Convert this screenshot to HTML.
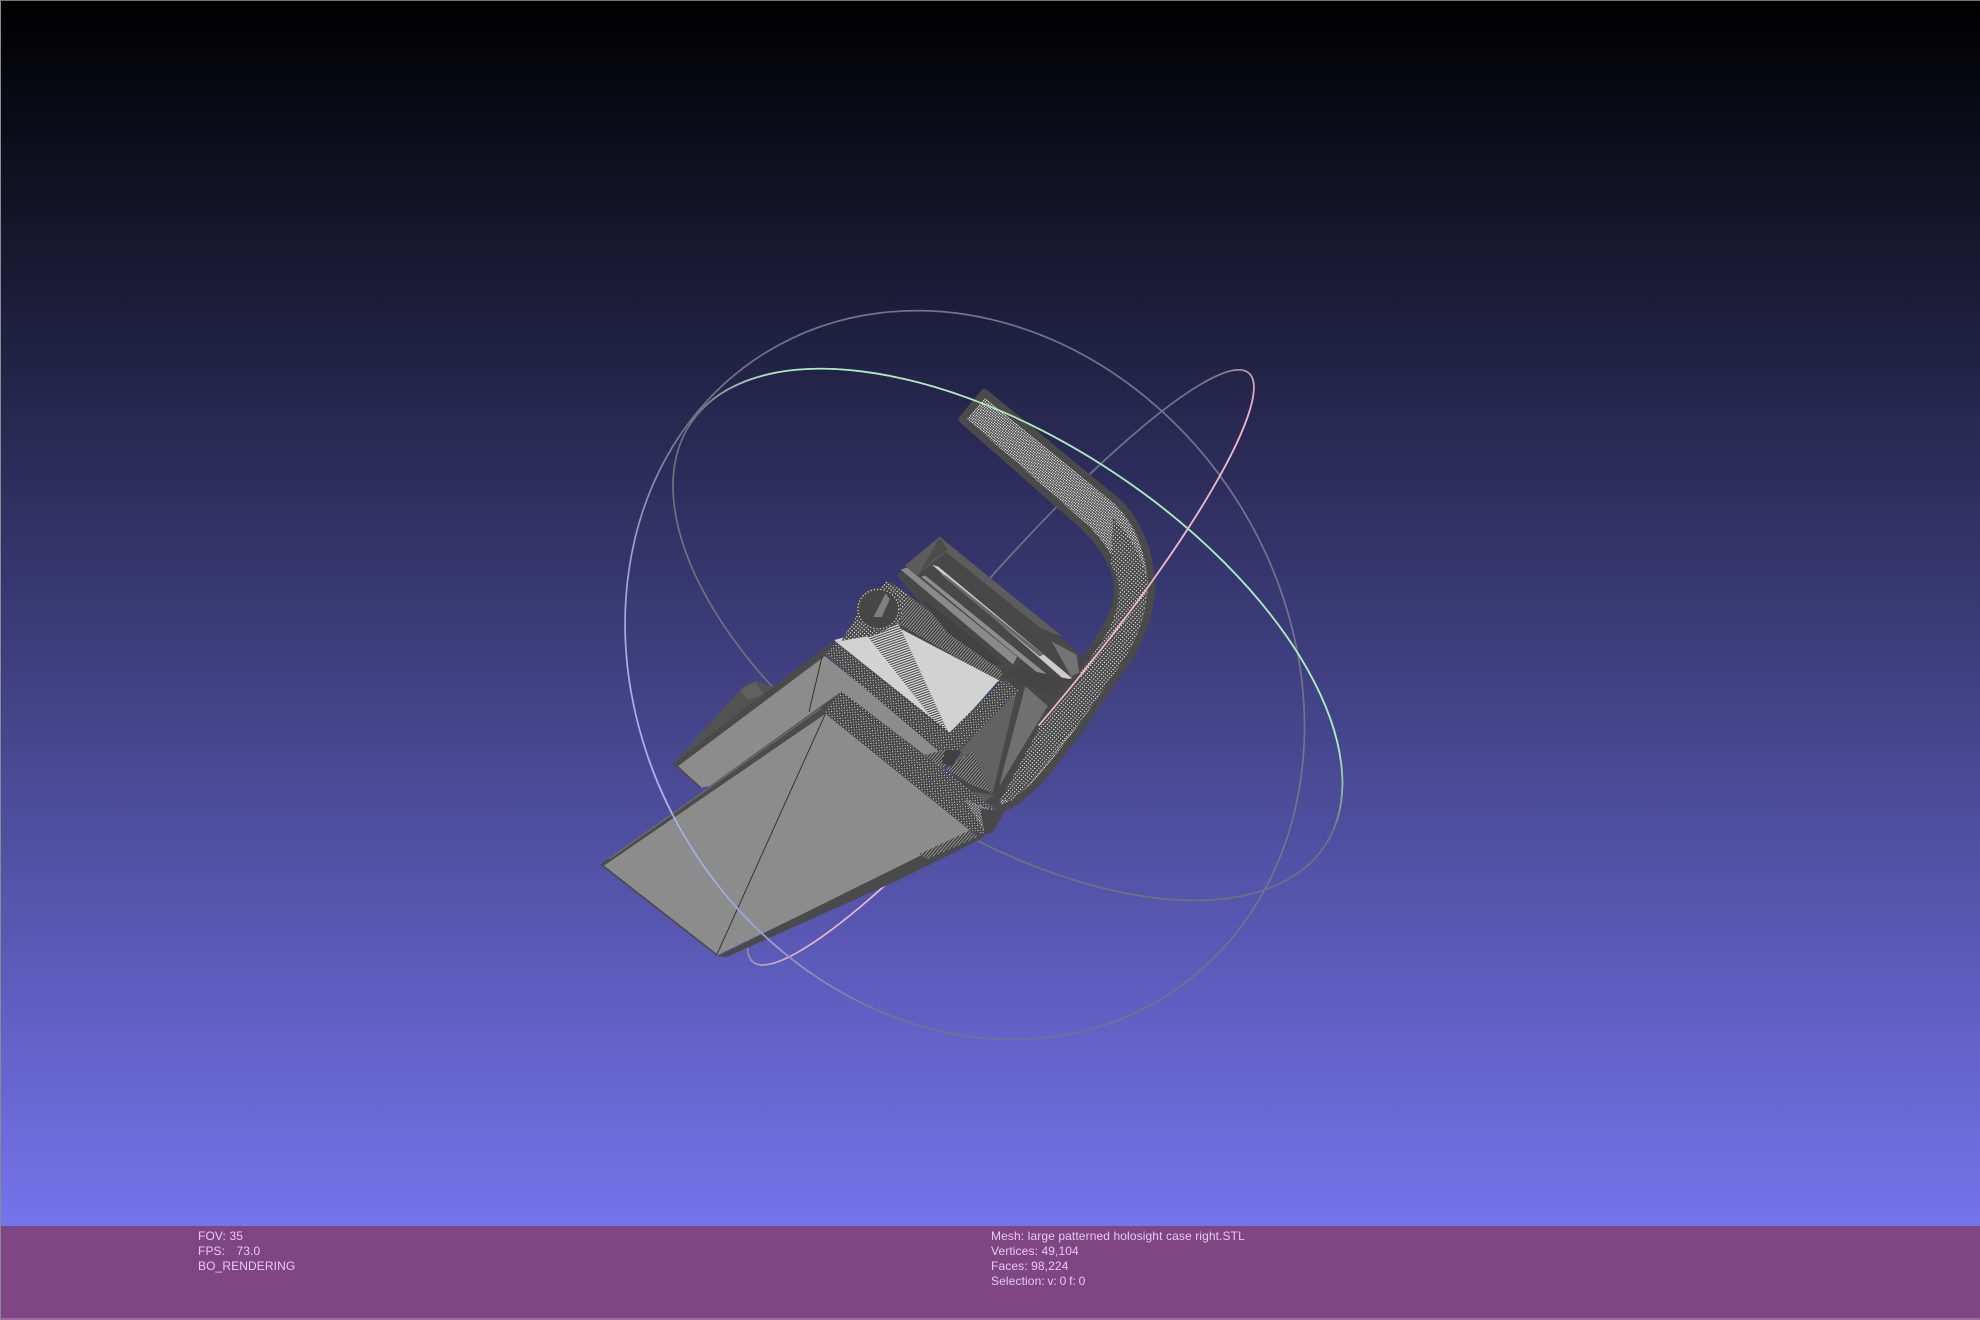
<!DOCTYPE html>
<html><head><meta charset="utf-8"><title>MeshLab</title>
<style>
html,body{margin:0;padding:0;background:#000}
#v{position:relative;width:1980px;height:1320px;overflow:hidden;background:linear-gradient(to bottom,#000 0,#7474ec 1226px);font-family:"Liberation Sans",sans-serif}
#v svg{position:absolute;left:0;top:0}
#bar{position:absolute;left:0;top:1226px;width:1980px;height:92px;background:#7f4684}
#bot{position:absolute;left:0;top:1318px;width:1980px;height:2px;background:#9a6c9c}
#l{position:absolute;left:0;top:0;width:1px;height:1320px;background:#8a8a92}
#t{position:absolute;left:0;top:0;width:1980px;height:1px;background:#777}
.tx{position:absolute;font-size:12px;line-height:15px;color:#e8c9f0;white-space:pre;letter-spacing:.11px}
</style></head><body>
<div id="v">
<svg width="1980" height="1320" viewBox="0 0 1980 1320" xmlns="http://www.w3.org/2000/svg">
<defs>
<pattern id="dense" width="5" height="5" patternUnits="userSpaceOnUse" patternTransform="rotate(40)"><rect width="5" height="5" fill="#484848"/><rect width="3" height="2.8" fill="#f4f4f4"/></pattern>
<pattern id="sparse" width="7" height="7" patternUnits="userSpaceOnUse" patternTransform="rotate(40)"><rect width="7" height="7" fill="#484848"/><rect width="2.8" height="2.8" fill="#fff"/></pattern>
<pattern id="band" width="9" height="9" patternUnits="userSpaceOnUse" patternTransform="rotate(40)"><rect width="9" height="9" fill="#444"/><rect width="2.5" height="2.5" fill="#fff"/><rect x="5" y="5" width="2" height="2" fill="#e8e8e8"/></pattern>
<pattern id="hatch" width="6" height="6" patternUnits="userSpaceOnUse" patternTransform="rotate(70)"><rect width="6" height="6" fill="#4a4a4a"/><rect width="3" height="6" fill="#e6e6e6"/></pattern>
<pattern id="hatch2" width="6" height="6" patternUnits="userSpaceOnUse" patternTransform="rotate(40)"><rect width="6" height="6" fill="#444"/><rect width="1.3" height="6" fill="#d0d0d0"/></pattern>
<linearGradient id="g1" gradientUnits="userSpaceOnUse" x1="495" y1="620" x2="625" y2="575"><stop offset="0" stop-color="#b8b8ee"/><stop offset=".4" stop-color="#a4a4dc"/><stop offset="1" stop-color="#72728a"/></linearGradient>
<linearGradient id="g2" gradientUnits="userSpaceOnUse" x1="804" y1="494" x2="837" y2="444"><stop offset="0" stop-color="#70707c"/><stop offset="1" stop-color="#aaecbc"/></linearGradient>
<linearGradient id="g3" gradientUnits="userSpaceOnUse" x1="752" y1="495" x2="832" y2="562"><stop offset=".25" stop-color="#727286"/><stop offset=".75" stop-color="#eeb8c8"/></linearGradient>
<clipPath id="c1"><polygon points="500,600 640,600 640,790 500,790"/></clipPath>
<clipPath id="c2"><polygon points="547,335 500,200 1100,200 1100,690 1049,670"/></clipPath>
<clipPath id="c3"><polygon points="982,285 1020,285 1020,500 842.6,588 809.4,566"/></clipPath>
</defs>

<!-- rings behind -->
<g transform="scale(1.2628)" fill="none" stroke-width="1.35">
<path stroke="url(#g1)" d="M922.1,789.5A300,256 58.2 1 0 605.9,279.5A300,256 58.2 1 0 922.1,789.5Z"/>
<path stroke="url(#g2)" d="M1049,669.9A301.7,153.4 33.7 1 0 547,335.1A301.7,153.4 33.7 1 0 1049,669.9Z"/>
<path stroke="url(#g3)" d="M988.8,295.3A304.8,52.7 -49.9 1 0 596.2,761.7A304.8,52.7 -49.9 1 0 988.8,295.3Z"/>
</g>

<!-- model -->
<g transform="translate(560,360) scale(.40816,.39541)">
<!-- rear lump -->
<path d="M278,1020L450,825L478,810L525,828L400,940Z" fill="#525252"/>
<path d="M440,835L478,815L500,845L460,860Z" fill="#606060"/>
<!-- upper panel -->
<path d="M285,1022L645,745L950,1000L700,1010L345,1082Z" fill="#8c8c8c"/>
<path d="M278,1020L672,708L650,748L288,1028Z" fill="#4a4a4a"/>
<path d="M642,750L610,890" stroke="#333" stroke-width="2.4"/>
<path d="M278,1020L345,1082" stroke="#4a4a4a" stroke-width="4"/>
<!-- strap -->
<path d="M1040,82L1365,358Q1440,430 1450,570Q1442,700 1362,800Q1265,955 1175,1062Q1120,1125 1075,1135L1060,1100L1130,960Q1260,810 1335,680Q1380,600 1360,540Q1340,475 1280,418L985,150Z" fill="url(#dense)" stroke="#4a4a4a" stroke-width="18" stroke-linejoin="round"/>
<path d="M1350,520Q1390,580 1345,680Q1265,815 1140,965L1070,1110L1110,1115Q1270,930 1380,760Q1440,660 1440,560Q1420,470 1355,400Z" fill="url(#sparse)"/>
<path d="M1340,690Q1260,820 1140,965L1075,1110L1040,1060L1120,900L1280,750Z" fill="#464646"/>
<!-- top block -->
<path d="M825,545L930,445L1272,742L1275,810L1130,830L1040,800Z" fill="#484848"/>
<path d="M930,447L1232,700L1180,680L945,485L875,545L845,520Z" fill="#5c5c5c"/>
<path d="M930,450L950,480L915,505L880,540Z" fill="#4c4c4c"/>
<path d="M1205,712L1265,745L1272,790L1252,800Z" fill="#747474"/>
<path d="M912,518L926,522L1255,805L1235,808Z" fill="#cccccc"/>
<path d="M885,548L895,545L1205,805L1190,808Z" fill="#8e8e8e"/>
<path d="M835,530L850,525L1120,750L1110,770Z" fill="#8a8a8a"/>
<path d="M930,540L945,545L1185,745L1175,750Z" fill="#6a6a6a"/>
<!-- mesh around face -->
<path d="M720,660L810,560L1120,795L1080,830L820,670Z" fill="#484848"/>
<path d="M825,575L925,650L1085,790L1075,815L835,670L815,670Z" fill="url(#hatch2)"/>
<path d="M880,600L960,660L1090,770L1060,770L950,690Z" fill="#424242"/>
<!-- face -->
<path d="M672,708L745,688L950,945L960,985Z" fill="#d2d2d2"/>
<path d="M745,688L830,668L955,950L945,950Z" fill="url(#hatch)"/>
<path d="M835,680L1075,810L955,950Z" fill="#d2d2d2"/>
<!-- knob -->
<path d="M690,710L725,650L800,560L850,590L835,660L775,695Z" fill="url(#sparse)"/>
<circle cx="780" cy="630" r="54" fill="#464646"/>
<circle cx="780" cy="630" r="50" fill="none" stroke="#fff" stroke-width="3" stroke-dasharray="3 5" opacity=".8"/>
<path d="M768,650L798,590L808,605L788,650Z" fill="#b8b8c4" opacity=".5"/>
<!-- right lower block -->
<path d="M940,1020L1130,810L1270,810L1180,920L1070,1130L1000,1100Z" fill="#484848"/>
<path d="M960,1010L1120,835L1060,1095Z" fill="#626262"/>
<path d="M1140,825L1195,875L1075,1080Z" fill="#707070"/>
<path d="M1125,830L1070,1095" stroke="#484848" stroke-width="6"/>
<path d="M945,1035L1010,990L1060,1095L1010,1075Z" fill="url(#hatch2)"/>
<path d="M1000,1090L1065,1100L1020,1130Z" fill="#5c5c5c"/>
<!-- band 3 -->
<path d="M945,952L1085,808L1125,835L975,990Z" fill="url(#band)"/>
<path d="M1080,790L1130,780L1260,810L1200,850L1140,820Z" fill="#454545"/>
<!-- band 1 -->
<path d="M675,712L965,950L985,1000L940,1000L650,745Z" fill="url(#band)"/>
<path d="M890,1000L945,985L945,1030L915,1030Z" fill="url(#hatch2)"/>
<path d="M945,985L985,990L960,1025L935,1020Z" fill="#404040"/>
<!-- main face -->
<path d="M100,1275L650,895L1005,1190L890,1255L385,1505Z" fill="#8c8c8c"/>
<path d="M100,1275L690,838L662,868L650,895L106,1280Z" fill="#4c4c4c"/>
<path d="M120,1262L640,880" stroke="#707070" stroke-width="3"/>
<path d="M650,895L385,1502" stroke="#333" stroke-width="2.4" fill="none"/>
<path d="M100,1275L385,1505" stroke="#4a4a4a" stroke-width="4"/>
<!-- band 2 -->
<path d="M690,838L1078,1145L1075,1170L1045,1200L1005,1190L650,895L662,868Z" fill="url(#band)"/>
<path d="M990,1110L1078,1145L1045,1200Z" fill="url(#dense)" opacity=".75"/>
<!-- bottom edge -->
<path d="M385,1508L408,1510L830,1315L1030,1212L1045,1200L1005,1190L890,1250Z" fill="#4a4a4a"/>
<path d="M880,1250L1003,1190L1025,1205L900,1262Z" fill="url(#hatch2)"/>
<path d="M1030,1135L1090,1140L1060,1195L1040,1200Z" fill="#484848"/>
</g>

<!-- rings in front -->
<g transform="scale(1.2628)" fill="none" stroke-width="1.35">
<path clip-path="url(#c1)" stroke="url(#g1)" d="M922.1,789.5A300,256 58.2 1 0 605.9,279.5A300,256 58.2 1 0 922.1,789.5Z"/>
<path clip-path="url(#c2)" stroke="url(#g2)" d="M1049,669.9A301.7,153.4 33.7 1 0 547,335.1A301.7,153.4 33.7 1 0 1049,669.9Z"/>
<path clip-path="url(#c3)" stroke="url(#g3)" d="M988.8,295.3A304.8,52.7 -49.9 1 0 596.2,761.7A304.8,52.7 -49.9 1 0 988.8,295.3Z"/>
</g>
</svg>
<div id="bar"></div><div id="bot"></div><div id="l"></div><div id="t"></div>
<div class="tx" style="left:198px;top:1229px">FOV: 35
FPS:   <span style="margin-left:1px">73.0</span>
BO_RENDERING</div>
<div class="tx" style="left:991px;top:1229px">Mesh: large patterned holosight case right.STL
Vertices: 49,104
Faces: 98,224
<span style="word-spacing:-.8px">Selection: v: 0 f: 0</span></div>
</div>
</body></html>
